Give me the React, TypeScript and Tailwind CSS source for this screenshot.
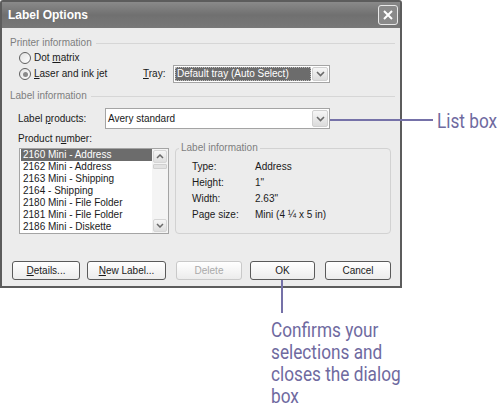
import React from "react";

const U = ({ c }: { c: string }) => <span className="underline">{c}</span>;

const Chevron = () => (
  <svg width="9" height="6" viewBox="0 0 9 6">
    <path d="M1 1 L4.5 4.5 L8 1" fill="none" stroke="#6a6a6a" strokeWidth="1.6" />
  </svg>
);

const DropBtn = () => (
  <div className="w-[16px] h-full flex items-center justify-center bg-linear-to-b from-[#f6f6f6] to-[#dcdcdc] border border-[#d0d0d0] rounded-[2px]">
    <Chevron />
  </div>
);

const Radio = ({ checked }: { checked?: boolean }) => (
  <div className="w-[12px] h-[12px] rounded-full border border-[#5f5f5f] bg-linear-to-br from-[#e2e2e2] to-white flex items-center justify-center">
    {checked && <div className="w-[5px] h-[5px] rounded-full bg-[#8a8a8a]" />}
  </div>
);

const Btn = ({ w, children, disabled }: { w: string; children: React.ReactNode; disabled?: boolean }) => (
  <div
    className={
      "h-[19px] rounded-[3px] border flex items-center justify-center bg-linear-to-b from-white to-[#ececec] " +
      w +
      (disabled ? " border-[#c9c9c9] text-[#a9a9a9]" : " border-[#5a5a5a] text-[#1a1a1a]")
    }
  >
    {children}
  </div>
);

const items = [
  "2160 Mini - Address",
  "2162 Mini - Address",
  "2163 Mini - Shipping",
  "2164 - Shipping",
  "2180 Mini - File Folder",
  "2181 Mini - File Folder",
  "2186 Mini - Diskette",
];

export default function App() {
  return (
    <div className="relative w-[500px] h-[407px] bg-white overflow-hidden font-['Liberation_Sans',Arial,sans-serif] text-[10px] leading-[12px] text-[#1a1a1a]">
      {/* Dialog */}
      <div className="w-[402px] h-[288px] flex flex-col border-2 border-[#5c5c5c] rounded-t-[3px]">
        {/* Title bar */}
        <div className="h-[26px] flex items-center justify-between pl-[6px] pr-[2px] bg-linear-to-b from-[#8a8a8a] via-[#707070] to-[#787878]">
          <span className="text-white font-bold text-[12px]">Label Options</span>
          <div className="w-[20px] h-[20px] rounded-[3px] border border-[#e8e8e8] bg-[#8a8a8a] flex items-center justify-center">
            <svg width="10" height="10" viewBox="0 0 10 10">
              <path d="M1 1 L9 9 M9 1 L1 9" stroke="white" strokeWidth="2" />
            </svg>
          </div>
        </div>

        {/* Body */}
        <div className="flex-1 bg-[#ececec] pl-[8px] pt-[9px] flex flex-col">
          {/* Printer information */}
          <div className="h-[12px] flex items-center pr-[5px]">
            <span className="text-[#7e7e7e]">Printer information</span>
            <div className="flex-1 h-px bg-[#d6d6d6] ml-[4px]" />
          </div>
          <div className="h-[14px] mt-[2px] flex items-center pl-[9px] gap-[3px]">
            <Radio />
            <span>
              Dot <U c="m" />atrix
            </span>
          </div>
          <div className="h-[18px] flex items-center pl-[9px]">
            <div className="w-[124px] flex items-center gap-[3px]">
              <Radio checked />
              <span>
                <U c="L" />aser and ink jet
              </span>
            </div>
            <span className="w-[30px]">
              <U c="T" />ray:
            </span>
            <div className="w-[157px] h-[18px] border border-[#a4a4a4] bg-white flex items-center p-[1px] gap-[1px]">
              <div className="flex-1 h-full bg-[#6c6c6c] text-white flex items-center pl-[1px] border border-dotted border-[#bbb]">
                Default tray (Auto Select)
              </div>
              <DropBtn />
            </div>
          </div>

          {/* Label information */}
          <div className="h-[12px] mt-[7px] flex items-center pr-[5px]">
            <span className="text-[#7e7e7e]">Label information</span>
            <div className="flex-1 h-px bg-[#d6d6d6] ml-[4px]" />
          </div>
          <div className="h-[21px] mt-[6px] flex items-center pl-[8px]">
            <span className="w-[87px]">
              Label <U c="p" />roducts:
            </span>
            <div className="w-[225px] h-[21px] border border-[#a4a4a4] bg-white flex items-center p-[1px] pl-[2px]">
              <span className="flex-1">Avery standard</span>
              <DropBtn />
            </div>
          </div>

          {/* Product list + info */}
          <div className="mt-[4px] flex pl-[8px]">
            <div className="w-[151px] flex flex-col">
              <span className="h-[12px]">
                Product n<U c="u" />mber:
              </span>
              <div className="mt-[3px] ml-[1px] w-[150px] h-[86px] border border-[#a4a4a4] bg-white flex">
                <div className="flex-1 flex flex-col pl-[1px]">
                  {items.map((it, i) => (
                    <div
                      key={it}
                      className={"h-[12px] pl-[2px] whitespace-nowrap " + (i === 0 ? "bg-[#6c6c6c] text-white" : "")}
                    >
                      {it}
                    </div>
                  ))}
                </div>
                <div className="w-[16px] flex flex-col bg-[#f4f4f4] p-[1px]">
                  <div className="h-[13px] rounded-[2px] bg-linear-to-b from-[#f6f6f6] to-[#dedede] border border-[#d6d6d6] flex items-center justify-center">
                    <svg width="8" height="5" viewBox="0 0 8 5">
                      <path d="M1 4 L4 1 L7 4" fill="none" stroke="#6a6a6a" strokeWidth="1.5" />
                    </svg>
                  </div>
                  <div className="h-[5px] mt-[1px] rounded-[1px] bg-[#e2e2e2] border border-[#d0d0d0]" />
                  <div className="flex-1" />
                  <div className="h-[13px] rounded-[2px] bg-linear-to-b from-[#f6f6f6] to-[#dedede] border border-[#d6d6d6] flex items-center justify-center">
                    <svg width="8" height="5" viewBox="0 0 8 5">
                      <path d="M1 1 L4 4 L7 1" fill="none" stroke="#6a6a6a" strokeWidth="1.5" />
                    </svg>
                  </div>
                </div>
              </div>
            </div>
            <div className="relative ml-[6px] mt-[15px] w-[216px] h-[86px] border border-[#d2d2d2] rounded-[4px] pt-[10px] pl-[16px]">
              <span className="absolute -top-[7px] left-[3px] px-[2px] bg-[#ececec] text-[#7e7e7e]">
                Label information
              </span>
              {[
                ["Type:", "Address"],
                ["Height:", "1\""],
                ["Width:", "2.63\""],
                ["Page size:", "Mini (4 \u00bc x 5 in)"],
              ].map(([k, v]) => (
                <div key={k} className="h-[16px] flex items-center">
                  <span className="w-[63px]">{k}</span>
                  <span>{v}</span>
                </div>
              ))}
            </div>
          </div>

          {/* Buttons */}
          <div className="mt-[27px] flex pl-[2px]">
            <Btn w="w-[68px]">
              <span>
                <U c="D" />etails...
              </span>
            </Btn>
            <div className="w-[7px]" />
            <Btn w="w-[79px]">
              <span>
                <U c="N" />ew Label...
              </span>
            </Btn>
            <div className="w-[10px]" />
            <Btn w="w-[66px]" disabled>
              Delete
            </Btn>
            <div className="w-[8px]" />
            <Btn w="w-[65px]">OK</Btn>
            <div className="w-[10px]" />
            <Btn w="w-[66px]">Cancel</Btn>
          </div>
        </div>
      </div>

      {/* Callout: OK */}
      <div className="pl-[271px] pt-[31px] font-['Roboto',Arial,sans-serif] text-[21px] leading-[22px] text-[#6f6a9f]">
        <div className="scale-x-[0.82] origin-left w-[200px]">
          Confirms your
          <br />
          selections and
          <br />
          closes the dialog
          <br />
          box
        </div>
      </div>

      {/* Overlay annotation lines */}
      <div className="absolute left-[281px] top-[280px] w-[2px] h-[33px] bg-[#7571a8]" />
      <div className="absolute left-[330px] top-[119px] w-[103px] h-[2px] bg-[#7571a8]" />
      <div className="absolute left-[437px] top-[110px] font-['Roboto',Arial,sans-serif] text-[21px] leading-[22px] text-[#6f6a9f] scale-x-[0.82] origin-left whitespace-nowrap">
        List box
      </div>
    </div>
  );
}
